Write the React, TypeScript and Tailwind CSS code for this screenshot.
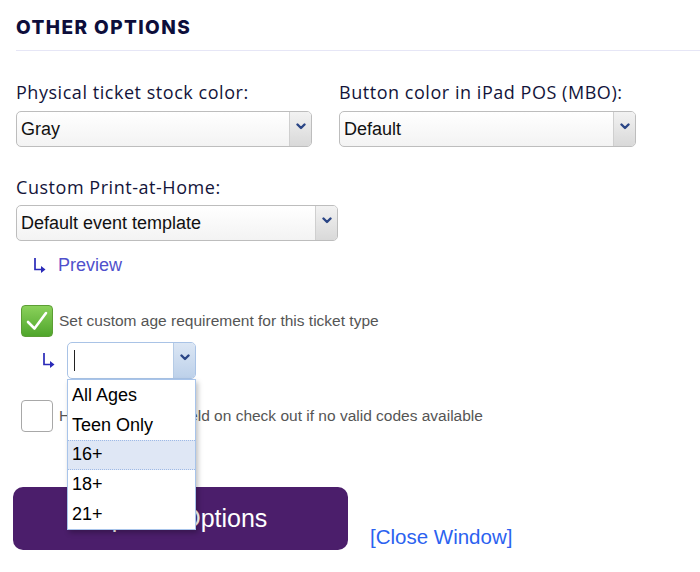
import React from "react";

const sans = "font-['Liberation_Sans',Arial,sans-serif]";
const label = "font-['Open_Sans',Lato,sans-serif] text-[18px] leading-[24px] tracking-[0.03em] text-[#13143a]";

function Chevron({ className = "" }: { className?: string }) {
  return (
    <svg width="10" height="7" viewBox="0 0 10 7" className={className}>
      <polyline points="1.5,1.5 5,5 8.5,1.5" fill="none" stroke="#2b4686" strokeWidth="2.4" strokeLinecap="round" strokeLinejoin="round" />
    </svg>
  );
}

function Select({ value, width }: { value: string; width: string }) {
  return (
    <div className={`${width} h-[36px] flex rounded-[5px] border border-[#bdbdbd] overflow-hidden bg-gradient-to-b from-[#ffffff] to-[#f3f3f3]`}>
      <div className={`flex-1 flex items-center pl-[4px] ${sans} text-[18px] text-[#111]`}>{value}</div>
      <div className="w-[22px] flex items-center justify-center border-l border-[#cfcfcf] bg-gradient-to-b from-[#f2f2f2] to-[#d9d9d9]">
        <Chevron className="-mt-[6px]" />
      </div>
    </div>
  );
}

// bent "down then right" arrow used before sub-options
function Bent() {
  return (
    <svg width="13" height="17" viewBox="0 0 13 17">
      <path d="M2 1 V12.5 H8.5" fill="none" stroke="#2a2ab8" strokeWidth="1.7" />
      <polygon points="8,9 12.5,12.5 8,16" fill="#2a2ab8" />
    </svg>
  );
}

export default function App() {
  const ages = ["All Ages", "Teen Only", "16+", "18+", "21+"];
  return (
    <div className="w-[700px] h-[572px] bg-white overflow-hidden relative">
      <div className="pl-4 pt-[14px]">
        <h2 className="font-['Inter',sans-serif] text-[19px] leading-[28px] font-extrabold tracking-[0.075em] text-[#0d0e3b]">OTHER OPTIONS</h2>
      </div>
      <div className="mt-[8px] ml-4 h-px bg-[#e6e6f6]" />

      <div className="pl-4 mt-[29px] flex gap-[27px]">
        <div>
          <div className={label}>Physical ticket stock color:</div>
          <div className="mt-[7px]"><Select value="Gray" width="w-[296px]" /></div>
        </div>
        <div>
          <div className={label}>Button color in iPad POS (MBO):</div>
          <div className="mt-[7px]"><Select value="Default" width="w-[297px]" /></div>
        </div>
      </div>

      <div className="pl-4 mt-[28px]">
        <div className={label}>Custom Print-at-Home:</div>
        <div className="mt-[6px]"><Select value="Default event template" width="w-[322px]" /></div>
        <div className="mt-[12px] pl-[17px] flex items-center gap-[12px] h-[24px]">
          <Bent />
          <span className={`${sans} text-[18px] text-[#5050cc]`}>Preview</span>
        </div>
      </div>

      <div className="pl-[21px] mt-[28px]">
        <div className="flex items-center gap-[6px]">
          <div className="w-[32px] h-[32px] rounded-[4px] border border-[#5c9e35] bg-gradient-to-b from-[#8ad15a] to-[#4fa62b] flex items-center justify-center">
            <svg width="24" height="22" viewBox="0 0 24 22">
              <path d="M3 12 L9.5 18.5 L21 3" fill="none" stroke="white" strokeWidth="2.6" strokeLinecap="round" strokeLinejoin="round" />
            </svg>
          </div>
          <span className={`${sans} text-[15.5px] text-[#555]`}>Set custom age requirement for this ticket type</span>
        </div>

        <div className="mt-[5px] pl-[21px] flex items-center gap-[12px] relative">
          <Bent />
          <div className="w-[129px] h-[37px] flex rounded-[5px] border border-[#a9c3e6] overflow-hidden bg-white">
            <div className="flex-1 flex items-center pl-[6px]">
              <div className="w-px h-[21px] bg-[#222]" />
            </div>
            <div className="w-[22px] flex items-center justify-center border-l border-[#b5cbe6] bg-gradient-to-b from-[#dbe6f4] to-[#bdd1ea]">
              <Chevron className="-mt-[6px]" />
            </div>
          </div>
          <div className="absolute left-[46px] top-[37px] w-[129px] bg-white border border-[#a8c4ea] shadow-[2px_3px_5px_rgba(0,0,0,0.25)] z-10 pt-[1px]">
            {ages.map((a) => (
              <div
                key={a}
                className={`h-[29.6px] flex items-center pl-[4px] ${sans} text-[18px] text-black ${a === "16+" ? "bg-[#dfe7f5] border-y border-dotted border-[#9db9e6]" : ""}`}
              >
                {a}
              </div>
            ))}
          </div>
        </div>

        <div className="mt-[21px] flex items-center gap-[6px]">
          <div className="w-[32px] h-[32px] rounded-[4px] border border-[#a8a8a8] bg-white" />
          <span className={`${sans} text-[15.5px] text-[#555]`}>Hide promo code field on check out if no valid codes available</span>
        </div>
      </div>

      <div className="pl-[13px] mt-[55px] flex items-end gap-[22px]">
        <button className={`w-[335px] h-[63px] rounded-[10px] bg-[#4b1e6b] text-white ${sans} text-[25px] flex items-center justify-center`}>
          Update Options
        </button>
        <span className={`${sans} text-[20.5px] text-[#2b62f0] -mb-[3px]`}>[Close Window]</span>
      </div>
    </div>
  );
}
